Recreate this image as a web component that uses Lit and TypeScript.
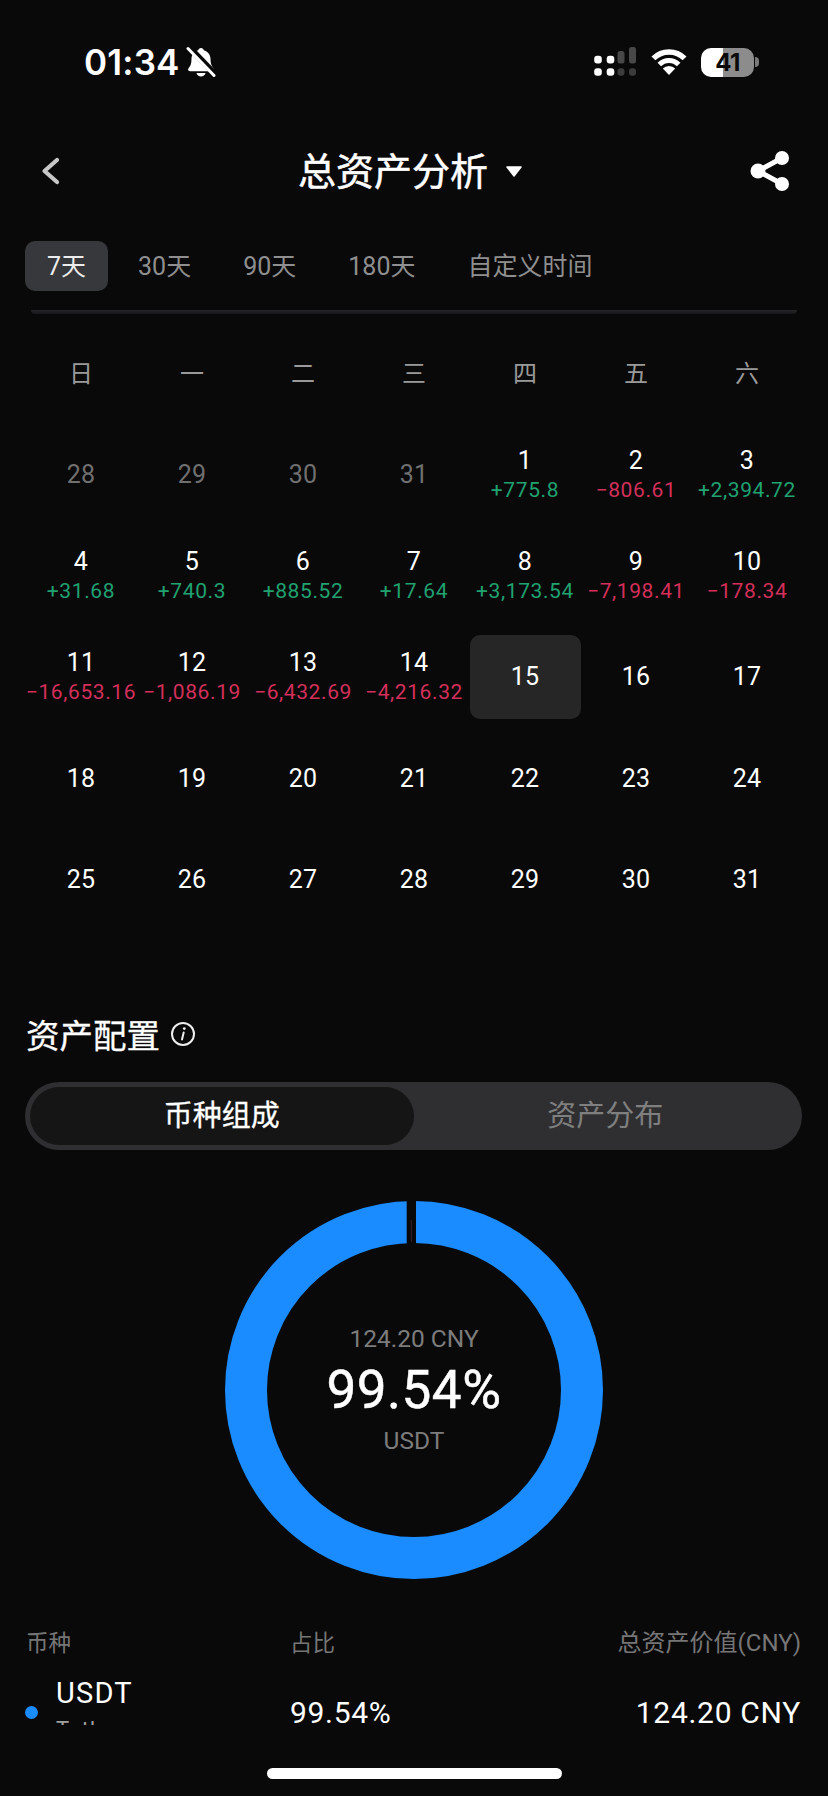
import { LitElement, css, html, svg } from 'lit';
import { customElement } from 'lit/decorators.js';
import { classMap } from 'lit/directives/class-map.js';

type Day = { n: number; amount?: string; muted?: boolean; selected?: boolean };

const TABS = ['7天', '30天', '90天', '180天', '自定义时间'];
const WEEKDAYS = ['日', '一', '二', '三', '四', '五', '六'];

const DAYS: Day[] = [
  { n: 28, muted: true },
  { n: 29, muted: true },
  { n: 30, muted: true },
  { n: 31, muted: true },
  { n: 1, amount: '+775.8' },
  { n: 2, amount: '-806.61' },
  { n: 3, amount: '+2,394.72' },
  { n: 4, amount: '+31.68' },
  { n: 5, amount: '+740.3' },
  { n: 6, amount: '+885.52' },
  { n: 7, amount: '+17.64' },
  { n: 8, amount: '+3,173.54' },
  { n: 9, amount: '-7,198.41' },
  { n: 10, amount: '-178.34' },
  { n: 11, amount: '-16,653.16' },
  { n: 12, amount: '-1,086.19' },
  { n: 13, amount: '-6,432.69' },
  { n: 14, amount: '-4,216.32' },
  { n: 15, selected: true },
  ...Array.from({ length: 16 }, (_, i) => ({ n: i + 16 })),
];

const bell = svg`
  <svg class="bell" width="30" height="32" viewBox="0 0 30 32">
    <path fill="#fff" d="M15 2c-1.600 0-2.500 1-2.700 2.200C8 5.400 5.500 8.800 5.500 13c0 4.500-1 7-3 9.300-.9 1.200-.4 2.900 1.400 2.900h22.200c1.800 0 2.300-1.700 1.400-2.900-2-2.300-3-4.800-3-9.300 0-4.200-2.500-7.600-6.800-8.800C17.500 3 16.600 2 15 2z"/>
    <path fill="#fff" d="M10.500 27h9c-.5 2.200-2.300 3.600-4.500 3.600s-4-1.400-4.500-3.600z"/>
    <path stroke="#090909" stroke-width="6" d="M3 1l27 28"/>
    <path stroke="#fff" stroke-width="3" stroke-linecap="round" d="M2 2.500l26 27"/>
  </svg>
`;

const signal = svg`
  <svg width="46" height="32" viewBox="0 0 46 32">
    <rect x="3.200" y="9.800" width="7.600" height="7.600" rx="3" fill="#fff"/>
    <rect x="15.700" y="9.800" width="7.600" height="7.600" rx="3" fill="#fff"/>
    <rect x="3.200" y="22.200" width="7.600" height="7.600" rx="3" fill="#fff"/>
    <rect x="15.700" y="22.200" width="7.600" height="7.600" rx="3" fill="#fff"/>
    <rect x="26.500" y="5" width="7" height="12.400" rx="2.500" fill="#484848"/>
    <rect x="38" y="1" width="7" height="16.400" rx="2.500" fill="#484848"/>
    <rect x="26.500" y="22.200" width="7" height="7.600" rx="3" fill="#3c3c3c"/>
    <rect x="38" y="22.200" width="7" height="7.600" rx="3" fill="#3c3c3c"/>
  </svg>
`;

const wifi = svg`
  <svg width="36" height="28" viewBox="0 0 36 28" fill="none" stroke="#fff">
    <path stroke-width="5.500" d="M2.400 10.400a22 22 0 0 1 31.200 0"/>
    <path stroke-width="5" d="M8.300 16.500a13.500 13.500 0 0 1 19.400 0"/>
    <path fill="#fff" stroke="none" d="M18 27l-6.200-6.400a8.800 8.800 0 0 1 12.400 0z"/>
  </svg>
`;

const share = svg`
  <svg width="40" height="42" viewBox="0 0 40 42">
    <path stroke="#fff" stroke-width="5" fill="none" d="M32 8L8 21l24 13"/>
    <circle cx="32" cy="8" r="7" fill="#fff"/>
    <circle cx="8" cy="21" r="7.500" fill="#fff"/>
    <circle cx="32" cy="34" r="7" fill="#fff"/>
  </svg>
`;

const back = svg`
  <svg width="20" height="32" viewBox="0 0 20 32" fill="none">
    <path stroke="#c8c8c8" stroke-width="4.200" stroke-linecap="round" stroke-linejoin="round" d="M17 5L4.500 16 17 27"/>
  </svg>
`;

const caret = svg`
  <svg width="18" height="12" viewBox="0 0 18 12">
    <path fill="#fff" stroke="#fff" stroke-width="1.500" stroke-linejoin="round" d="M2 2h14l-7 9z"/>
  </svg>
`;

const info = svg`
  <svg width="26" height="26" viewBox="0 0 26 26" fill="none">
    <circle cx="13" cy="13" r="11" stroke="#eee" stroke-width="2"/>
    <circle cx="14.300" cy="7.600" r="1.400" fill="#eee"/>
    <path stroke="#eee" stroke-width="2" stroke-linecap="round" d="M13.700 11.500l-1.700 7"/>
  </svg>
`;

const donut = svg`
  <svg width="380" height="380" viewBox="0 0 380 380">
    <circle cx="190" cy="190" r="168" fill="none" stroke="#1a8cff" stroke-width="42"/>
    <rect x="182.700" y="0" width="9.300" height="46" fill="#090909"/>
    <rect x="186.800" y="20" width="1" height="22" fill="#3a2230"/>
  </svg>
`;

@customElement('app-root')
export class AppRoot extends LitElement {
  renderDay(d: Day) {
    const classes = classMap({ day: true, muted: !!d.muted, selected: !!d.selected });
    const tone = d.amount?.startsWith('-') ? 'amount down' : 'amount up';
    return html`
      <div class=${classes}>
        <span class="num">${d.n}</span>
        ${d.amount ? html`<span class=${tone}>${d.amount.replace('-', '\u2212')}</span>` : null}
      </div>
    `;
  }

  render() {
    return html`
      <div class="status">
        <div class="status-left"><span class="time">01:34</span>${bell}</div>
        <div class="status-right">
          ${signal}${wifi}
          <div class="battery"><div class="battery-body"><span>41</span></div><i></i></div>
        </div>
      </div>

      <header>
        ${back}
        <div class="title"><span>总资产分析</span>${caret}</div>
        ${share}
      </header>

      <nav>
        ${TABS.map((t, i) => html`<div class=${classMap({ tab: true, active: i === 0 })}>${t}</div>`)}
      </nav>
      <div class="rule"></div>

      <div class="weekdays">${WEEKDAYS.map((w) => html`<span>${w}</span>`)}</div>
      <div class="days">${DAYS.map((d) => this.renderDay(d))}</div>

      <div class="section-title"><span>资产配置</span>${info}</div>
      <div class="segment">
        <div class="seg active">币种组成</div>
        <div class="seg">资产分布</div>
      </div>

      <div class="chart">
        ${donut}
        <div class="chart-label">
          <span class="chart-value">124.20 CNY</span>
          <span class="chart-pct">99.54%</span>
          <span class="chart-name">USDT</span>
        </div>
      </div>

      <div class="table-head">
        <span>币种</span><span>占比</span><span class="right total">总资产价值(CNY)</span>
      </div>
      <div class="table-view">
        <div class="row">
          <div class="coin">
            <i class="dot"></i>
            <div class="coin-name"><span>USDT</span><small>Tether</small></div>
          </div>
          <span class="cell">99.54%</span>
          <span class="cell right">124.20 CNY</span>
        </div>
      </div>

      <div class="home"></div>
    `;
  }

  static styles = css`
    :host {
      display: block;
      height: 1796px;
      overflow: hidden;
      background: #090909;
      color: #fff;
      font-family: Roboto, 'Noto Sans CJK SC', sans-serif;
    }

    .status {
      height: 124px;
      display: flex;
      align-items: center;
      justify-content: space-between;
      padding: 0 69px 0 84px;
    }
    .status-left,
    .status-right {
      display: flex;
      align-items: center;
    }
    .status-left {
      gap: 6px;
    }
    .status-right {
      gap: 14px;
    }
    .time {
      font: 600 35px Inter, sans-serif;
      letter-spacing: 0.2px;
    }
    .battery {
      display: flex;
      align-items: center;
      gap: 1px;
    }
    .battery-body {
      width: 53px;
      height: 29px;
      border-radius: 10px;
      background: linear-gradient(90deg, #fff 0 22px, #8c8c8c 22px);
      color: #0a0a0a;
      font: 700 24px/29px Inter, sans-serif;
      text-align: center;
      letter-spacing: -0.5px;
    }
    .battery i {
      width: 4px;
      height: 10px;
      border-radius: 0 4px 4px 0;
      background: #7a7a7a;
    }

    header {
      height: 94px;
      display: flex;
      align-items: center;
      justify-content: space-between;
      padding: 0 38px 0 40px;
    }
    .title {
      display: flex;
      align-items: center;
      gap: 17px;
      font-size: 38px;
      -webkit-text-stroke: 0.5px #fff;
      margin-left: 11px;
    }
    .title span {
      margin-top: -5px;
    }

    nav {
      display: flex;
      gap: 8px;
      margin: 23px 25px 0;
    }
    .tab {
      height: 50px;
      line-height: 52px;
      padding: 0 22px;
      border-radius: 10px;
      font-size: 25px;
      color: #8f8f8f;
    }
    .tab.active {
      background: #36383b;
      color: #ececec;
    }
    .rule {
      height: 4px;
      margin: 19px 31px 0;
      border-radius: 0 0 6px 6px;
      background: linear-gradient(#262628, #161618);
    }

    .weekdays,
    .days {
      display: grid;
      grid-template-columns: repeat(7, 111px);
      padding: 0 25px 0 25.500px;
      text-align: center;
    }
    .weekdays {
      margin-top: 30px;
      height: 60px;
      line-height: 60px;
      font-size: 24px;
      color: #9a9a9a;
    }
    .days {
      margin-top: 29px;
      grid-auto-rows: 84px;
      row-gap: 17.200px;
    }
    .day {
      display: flex;
      flex-direction: column;
      align-items: center;
      justify-content: center;
      border-radius: 10px;
      white-space: nowrap;
    }
    .day.selected {
      background: #262626;
    }
    .num {
      font-size: 25px;
      line-height: 30px;
      letter-spacing: 0.3px;
    }
    .muted .num {
      color: #6f6f6f;
    }
    .amount {
      font-size: 21px;
      line-height: 28px;
      letter-spacing: 0.6px;
    }
    .up {
      color: #20a271;
    }
    .down {
      color: #d42f5a;
    }

    .section-title {
      display: flex;
      align-items: center;
      gap: 10px;
      height: 46px;
      margin: 89px 25px 0 26px;
      font-size: 33.500px;
      -webkit-text-stroke: 0.3px #fff;
    }
    .section-title svg {
      margin-top: 1px;
    }

    .segment {
      display: grid;
      grid-template-columns: 1fr 1fr;
      height: 68px;
      margin: 25px 26px 0 25px;
      padding: 5px;
      box-sizing: border-box;
      border-radius: 34px;
      background: #2f2f31;
    }
    .seg {
      border-radius: 29px;
      line-height: 58px;
      text-align: center;
      font-size: 29px;
      color: #7f7f7f;
    }
    .seg.active {
      background: #151516;
      color: #fff;
      -webkit-text-stroke: 0.3px #fff;
    }

    .chart {
      position: relative;
      width: 380px;
      height: 380px;
      margin: 50px auto 0;
    }
    .chart svg {
      display: block;
    }
    .chart-label {
      position: absolute;
      inset: 0;
      display: flex;
      flex-direction: column;
      align-items: center;
      justify-content: center;
    }
    .chart-value,
    .chart-name {
      font-size: 24.500px;
      line-height: 30px;
      color: #7c7c7c;
    }
    .chart-pct {
      font-size: 53px;
      line-height: 72px;
      letter-spacing: 0.5px;
      -webkit-text-stroke: 0.5px #fff;
    }

    .table-head,
    .row {
      display: grid;
      grid-template-columns: 264px 1fr auto;
    }
    .table-head {
      margin-top: 48px;
      padding: 0 27px 0 26px;
      height: 30px;
      line-height: 30px;
      font-size: 22.500px;
      color: #767676;
    }
    .total {
      font-size: 24px;
    }
    .table-view {
      display: flow-root;
      height: 67px;
    }
    .row {
      padding: 0 27px 0 25px;
      margin-top: 18px;
      height: 74px;
      grid-template-columns: 265px 1fr auto;
      align-items: center;
    }
    .coin {
      display: flex;
      align-items: center;
      gap: 18px;
    }
    .dot {
      width: 13px;
      height: 13px;
      border-radius: 50%;
      background: #1a8cff;
    }
    .coin-name {
      display: flex;
      flex-direction: column;
      height: 74px;
      font-size: 29px;
      line-height: 34px;
      letter-spacing: 1.200px;
    }
    .coin-name small {
      height: 15px;
      overflow: hidden;
      font-size: 22px;
      line-height: 40px;
      letter-spacing: 1px;
      color: #a0a0a0;
    }
    .cell {
      font-size: 30px;
      letter-spacing: 0.7px;
      margin-top: -1px;
    }
    .right {
      text-align: right;
    }

    .home {
      width: 295px;
      height: 11px;
      margin: 43px auto 0;
      border-radius: 6px;
      background: #fff;
    }
  `;
}

declare global {
  interface HTMLElementTagNameMap {
    'app-root': AppRoot;
  }
}
